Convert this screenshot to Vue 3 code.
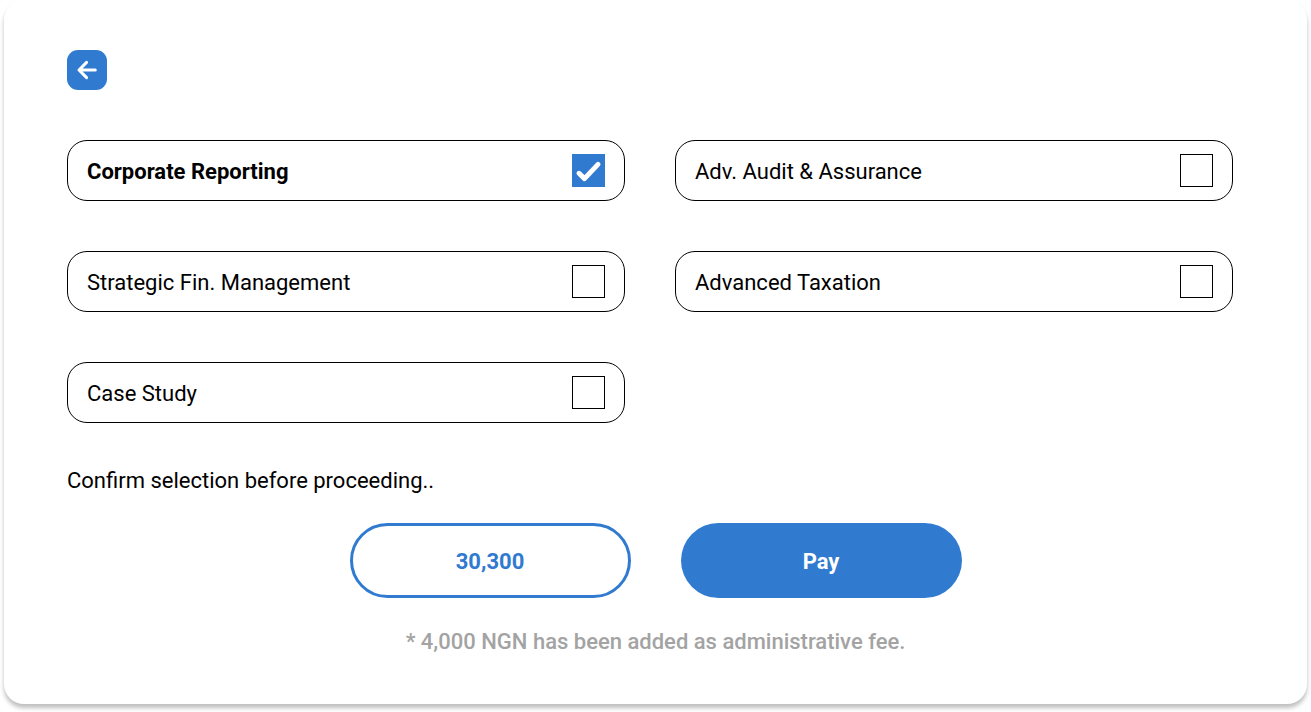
<script setup>
import { ref } from 'vue'

const subjects = ref([
  { id: 'reporting', name: 'Corporate Reporting', checked: true },
  { id: 'audit', name: 'Adv. Audit & Assurance', checked: false },
  { id: 'finance', name: 'Strategic Fin. Management', checked: false },
  { id: 'taxation', name: 'Advanced Taxation', checked: false },
  { id: 'case', name: 'Case Study', checked: false },
])
</script>

<template>
  <main class="card">
    <button class="back" type="button" aria-label="Go back">
      <svg viewBox="0 0 40 40" aria-hidden="true">
        <path d="M28.3 20H12M19.6 12.4L12 20L19.6 27.6" />
      </svg>
    </button>
    <div class="subjects">
      <label v-for="s in subjects" :key="s.id" class="subject" :class="{ selected: s.checked }" :for="s.id">
        <span class="name">{{ s.name }}</span>
        <span class="box">
          <input :id="s.id" v-model="s.checked" type="checkbox" />
          <svg v-if="s.checked" viewBox="0 0 33 33" aria-hidden="true">
            <path d="M7 19.3L12.5 24.6L26 10.4" />
          </svg>
        </span>
      </label>
    </div>
    <p class="confirm">Confirm selection before proceeding..</p>
    <div class="actions">
      <button class="amount" type="button">30,300</button>
      <button class="pay" type="button">Pay</button>
    </div>
    <p class="note">* 4,000 NGN has been added as administrative fee.</p>
  </main>
</template>

<style>
body {
  background: #fff;
}
</style>

<style scoped>
.card {
  box-sizing: border-box;
  margin: 0 4px 8px;
  padding: 50px 74px 49px 63px;
  border-radius: 20px;
  background: #fff;
  box-shadow: 0 4px 4px rgba(0, 0, 0, 0.25);
  color: #000;
  font-family: Roboto, sans-serif;
  font-size: 22px;
  line-height: 26px;
}
button {
  font: inherit;
  padding: 0;
  border: 0;
  cursor: pointer;
}
.back {
  display: block;
  width: 40px;
  height: 40px;
  border-radius: 11px;
  background: #307ad0;
}
.back svg,
.box svg {
  display: block;
  fill: none;
  stroke: #fff;
  stroke-width: 3;
  stroke-linecap: round;
  stroke-linejoin: round;
}
.subjects {
  display: grid;
  grid-template-columns: 1fr 1fr;
  gap: 50px;
  margin-top: 50px;
}
.subject {
  box-sizing: border-box;
  display: flex;
  align-items: center;
  justify-content: space-between;
  height: 61px;
  padding: 0 19px;
  border: 1px solid #000;
  border-radius: 20px;
}
.name {
  padding-top: 2px;
}
.selected {
  font-weight: 700;
}
.box {
  display: grid;
  width: 33px;
  height: 33px;
}
.box > * {
  grid-area: 1 / 1;
}
.box input {
  appearance: none;
  box-sizing: border-box;
  width: 33px;
  height: 33px;
  margin: 0;
  border: 1px solid #000;
}
.box input:checked {
  border: 0;
  background: #307ad0;
}
.box svg {
  z-index: 1;
  pointer-events: none;
  stroke-width: 5;
}
.confirm {
  margin: 45px 0 29px;
}
.actions {
  display: flex;
  justify-content: center;
  gap: 50px;
  margin-right: -11px;
}
.actions button {
  box-sizing: border-box;
  width: 281px;
  height: 75px;
  padding-top: 2px;
  border-radius: 38px;
  font-weight: 700;
}
.actions .amount {
  border: 3px solid #307ad0;
  background: #fff;
  color: #307ad0;
}
.actions .pay {
  background: #307ad0;
  color: #fff;
}
.note {
  margin: 31px -11px 0 0;
  color: #a3a3a3;
  font-weight: 500;
  text-align: center;
}
</style>
